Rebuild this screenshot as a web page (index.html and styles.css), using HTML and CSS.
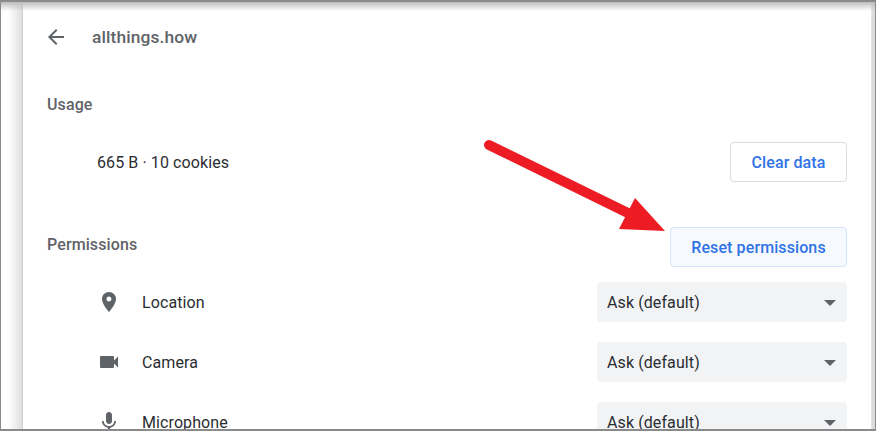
FILE: index.html
```html
<!DOCTYPE html>
<html lang="en">
<head>
    <meta charset="UTF-8">
    <meta name="viewport" content="width=device-width, initial-scale=1.0">
    <title>Site settings</title>
    <link rel="stylesheet" href="styles.css">
</head>
<body>
    <div class="frame">
        <div class="side"></div>
        <main class="card">
            <header class="title-row">
                <svg class="back-icon" viewBox="0 0 24 24"><path d="M20 11H7.83l5.59-5.59L12 4l-8 8 8 8 1.41-1.41L7.83 13H20v-2z"/></svg>
                <h1>allthings.how</h1>
            </header>

            <h2 class="usage-title">Usage</h2>
            <div class="usage-row">
                <span>665 B · 10 cookies</span>
                <button class="btn">Clear data</button>
            </div>

            <div class="perm-head">
                <h2 class="perm-title">Permissions</h2>
                <button class="btn btn-reset">Reset permissions</button>
            </div>

            <div class="perm-row">
                <svg class="perm-icon" viewBox="0 0 24 24"><path d="M12 2C8.13 2 5 5.13 5 9c0 5.25 7 13 7 13s7-7.75 7-13c0-3.87-3.13-7-7-7zm0 9.5a2.5 2.5 0 1 1 0-5 2.5 2.5 0 0 1 0 5z"/></svg>
                <span class="perm-name">Location</span>
                <div class="select">Ask (default)<i class="caret"></i></div>
            </div>
            <div class="perm-row">
                <svg class="perm-icon" viewBox="0 0 24 24"><path d="M17 10.5V7c0-.55-.45-1-1-1H4c-.55 0-1 .45-1 1v10c0 .55.45 1 1 1h12c.55 0 1-.45 1-1v-3.5l4 4v-11l-4 4z"/></svg>
                <span class="perm-name">Camera</span>
                <div class="select">Ask (default)<i class="caret"></i></div>
            </div>
            <div class="perm-row">
                <svg class="perm-icon" viewBox="0 0 24 24"><path d="M12 14c1.66 0 3-1.34 3-3V5c0-1.66-1.34-3-3-3S9 3.34 9 5v6c0 1.66 1.34 3 3 3zm5.3-3c0 3-2.54 5.1-5.3 5.1S6.7 14 6.7 11H5c0 3.41 2.72 6.23 6 6.72V21h2v-3.28c3.28-.48 6-3.3 6-6.72h-1.7z"/></svg>
                <span class="perm-name">Microphone</span>
                <div class="select">Ask (default)<i class="caret"></i></div>
            </div>
        </main>
        <div class="side-right"></div>
    </div>

    <!-- red annotation arrow -->
    <svg class="arrow" viewBox="0 0 876 431">
        <path d="M489 145L632 215" stroke="#ed1c24" stroke-width="10" stroke-linecap="round" fill="none"/>
        <path d="M635 198L665 231L619 229Z" fill="#ed1c24"/>
    </svg>
</body>
</html>
```

FILE: styles.css
```css
* {
    box-sizing: border-box;
}

html, body {
    margin: 0;
    height: 100%;
    overflow: hidden;
}

body {
    font-family: Roboto, "Liberation Sans", sans-serif;
    letter-spacing: 0.1px;
    background: #fff;
}

.frame {
    display: flex;
    height: 431px;
    border: 1px solid #8a8a8a;
    border-width: 2px 1px 2px 1px;
    overflow: hidden;
    position: relative;
}

/* soft shadow under the top edge */
.frame::before {
    content: "";
    position: absolute;
    top: 0;
    left: 0;
    right: 0;
    height: 9px;
    background: linear-gradient(#bdbdbd, rgba(255, 255, 255, 0));
    z-index: 1;
}

.side {
    width: 21px;
    flex: none;
    background: linear-gradient(90deg, #fff 35%, #dedede);
}

.side-right {
    flex: 1;
    background: #dcdcdc;
}

.card {
    flex: none;
    width: 850px;
    padding: 0 24px;
    background: #fff;
    border-left: 1px solid #d0d0d0;
    border-right: 1px solid #e4e4e4;
}

.title-row {
    display: flex;
    align-items: center;
    height: 70px;
}

.back-icon {
    width: 24px;
    height: 24px;
    margin-left: -3px;
    fill: #5f6368;
}

h1 {
    margin: 0 0 0 24px;
    font-size: 17.4px;
    font-weight: 500;
    color: #5f6368;
}

h2 {
    margin: 0;
    font-size: 16px;
    font-weight: 500;
    color: #5f6368;
}

.usage-title {
    margin-top: 24px;
    line-height: 17px;
}

.usage-row {
    display: flex;
    align-items: center;
    justify-content: space-between;
    margin-top: 29px;
    padding-left: 50px;
    font-size: 16px;
    color: #2a2d31;
}

.btn {
    height: 40px;
    padding: 0;
    width: 117px;
    border: 1px solid #dadce0;
    border-radius: 4px;
    background: #fff;
    color: #2f73e6;
    font-family: inherit;
    font-size: 16px;
    font-weight: 500;
    letter-spacing: 0.1px;
}

.btn-reset {
    width: 177px;
    background: #f6f9fe;
    border-color: #d2e3fc;
}

.perm-head {
    display: flex;
    align-items: center;
    justify-content: space-between;
    margin-top: 45px;
    margin-bottom: 15px;
}

.perm-title {
    padding-bottom: 6px;
}

.perm-row {
    display: flex;
    align-items: center;
    height: 40px;
    margin-bottom: 20px;
    padding-left: 50px;
    font-size: 16px;
    color: #2a2d31;
}

.perm-icon {
    width: 24px;
    height: 24px;
    flex: none;
    fill: #5f6368;
}

.perm-name {
    margin-left: 21px;
    padding-top: 1px;
    flex: 1;
}

.select {
    display: flex;
    align-items: center;
    justify-content: space-between;
    width: 250px;
    height: 40px;
    padding: 1px 11px 0 10px;
    background: #f1f3f4;
    border-radius: 4px;
}

.caret {
    width: 0;
    height: 0;
    border-left: 6px solid transparent;
    border-right: 6px solid transparent;
    border-top: 6px solid #5f6368;
}

.arrow {
    position: absolute;
    top: 0;
    left: 0;
    width: 876px;
    height: 431px;
}
```
